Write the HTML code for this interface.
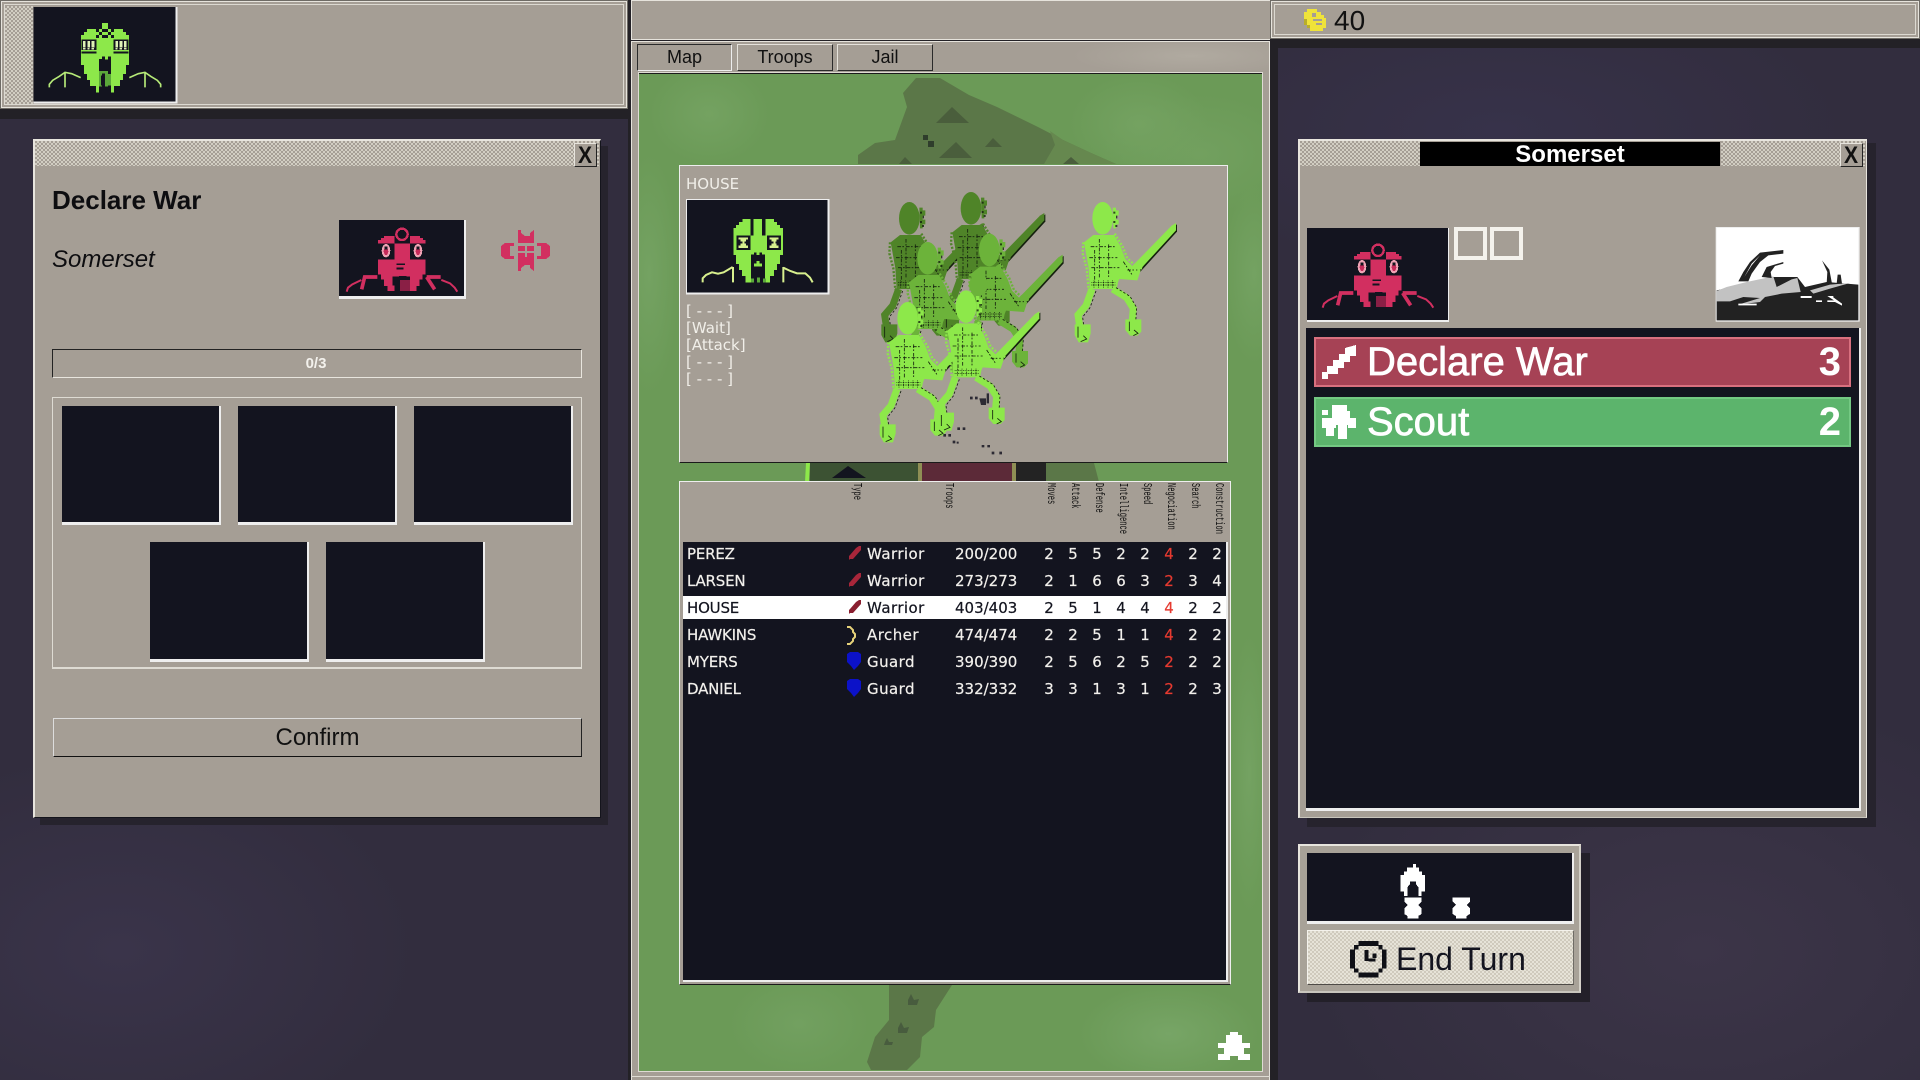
<!DOCTYPE html>
<html><head><meta charset="utf-8"><title>Declare War</title>
<style>
html,body{margin:0;padding:0;width:1920px;height:1080px;overflow:hidden}
body{position:relative;background:#322d3e;background-image:radial-gradient(300px 200px at 120px 950px,#3a344a,transparent),radial-gradient(400px 260px at 1700px 950px,#3c3548,transparent),radial-gradient(350px 150px at 1500px 130px,#37324a,transparent);font-family:"Liberation Sans",sans-serif;color:#0d0d10}
.a{position:absolute;box-sizing:border-box}
.pan{background:#a59e95}
.top{box-shadow:inset 0 0 0 1px #6e6b65,inset 0 0 0 2px #e6e3dc,inset 0 0 0 4px #a59e95,inset 0 0 0 5px #dcd9d1}
.chk{background:repeating-conic-gradient(#d2cec3 0 25%,#a59e95 0 50%) 0 0/4px 4px}
.dk{background:#13141f}
.win{background:#a59e95;border-style:solid;border-width:2px 1px 1px 2px;border-color:#e8e5de #14141c #14141c #e8e5de}
.slot{background:#13141f;border-right:2px solid #eee;border-bottom:3px solid #eee}
.x{width:23px;height:24px;border:1px solid;border-color:#e8e5de #222 #222 #e8e5de;background:#a59e95;font-weight:bold;font-size:24px;line-height:23px;text-align:center;color:#111}
.x b{display:inline-block;transform:scaleX(.88)}
.tab{height:27px;line-height:25px;text-align:center;font-size:18px;border:1px solid;color:#111;background:#a59e95}
.row{left:683px;width:543px;height:23px;display:grid;grid-template-columns:166px 18px 88px 82px repeat(8,24px);line-height:25px;font-family:"DejaVu Sans",sans-serif;font-size:15px;color:#f2f0ec;white-space:nowrap;-webkit-text-stroke:.2px currentColor}
.row span{overflow:visible}
.row span:first-child{padding-left:4px;letter-spacing:-.2px}
.row span:nth-child(3){letter-spacing:.45px}
.row .n{text-align:center}
.row .r{color:#e63a30}
.hi{background:#fff;color:#13141f}
.hd{font-family:"Liberation Mono",monospace;font-size:12px;line-height:12px;color:#111;transform-origin:0 0;white-space:nowrap}
.act{font-family:"DejaVu Sans",sans-serif;font-size:15px;color:#f1efe9;left:686px;line-height:17px}
svg{position:absolute;display:block;overflow:visible}
.bar{left:1314px;width:537px;height:50px;border:2px solid;color:#fff;font-size:40px;line-height:46px;-webkit-text-stroke:.7px #fff}
.bar b{-webkit-text-stroke:0}
</style></head><body>

<!-- structural dark strips -->
<div class="a" style="left:0;top:109px;width:628px;height:10px;background:#232126"></div>
<div class="a" style="left:628px;top:0;width:3px;height:1080px;background:#232126"></div>
<div class="a" style="left:1270px;top:39px;width:650px;height:9px;background:#232126"></div>
<div class="a" style="left:1270px;top:39px;width:8px;height:1041px;background:#232126"></div>

<!-- top left panel -->
<div class="a pan top" style="left:0;top:0;width:628px;height:109px"></div>
<div class="a chk" style="left:5px;top:6px;width:28px;height:98px"></div>
<svg style="left:30px;top:5px" width="150" height="100" viewBox="0 0 450 300" shape-rendering="crispEdges">
<rect x="10" y="6" width="432" height="290" fill="#eee"/><rect x="10" y="6" width="427" height="284" fill="#13141f"/>
<path fill="#8de84a" d="M180 72H207V63H216V54H234V63H243V72H270V72H279V81H288V90H297V180H288V207H279V225H270V243H252V262H198V243H180V225H171V207H162V180H153V90H162V81H171V72H180Z"/>
<path fill="#13141f" d="M207 63h9v9h-9zM234 63h9v9h-9zM216 72h18v9h-18zM198 72h9v9h-9zM243 72h9v9h-9zM207 81h9v9h-9zM234 81h9v9h-9zM198 90h9v9h-9zM216 90h18v9h-18zM243 90h9v9h-9z"/>
<path fill="#13141f" d="M155 103H200V146H155zM250 103H295V146H250z"/>
<path fill="#8de84a" d="M155 135H200V140H155zM250 135H295V140H250z"/>
<path fill="#dff3b5" d="M159 108h8v19h-8zM172 108h8v19h-8zM185 108h8v19h-8zM256 108h8v19h-8zM269 108h8v19h-8zM282 108h8v19h-8zM159 129h7v5h-7zM172 129h7v5h-7zM185 129h7v5h-7zM256 129h7v5h-7zM269 129h7v5h-7zM282 129h7v5h-7z"/>
<path fill="#13141f" d="M207 162h9v-8h9v9h9v-9h9v8V243H243V262H207Z"/>
<path fill="#5ba83a" d="M207 198h9v46h-9zM225 198h9v46h-9zM216 198h9v8h-9zM234 207h9v35h-9z"/>
<path fill="#13141f" d="M213 211h8v30h-8z"/>
<path fill="none" stroke="#b6ea78" stroke-width="5" shape-rendering="auto" d="M58 247V238L68 226L88 214L105 202L125 206L152 218M105 204V247M298 218L325 206L345 202L362 214L382 226L392 238V247M345 204V247"/>
</svg>

<!-- left dialog -->
<div class="a win" style="left:33px;top:139px;width:568px;height:679px;box-shadow:7px 7px 0 #26232d"></div>
<div class="a chk" style="left:35px;top:141px;width:540px;height:25px"></div>
<div class="a chk" style="left:575px;top:141px;width:24px;height:25px"></div>
<div class="a x" style="left:574px;top:143px"><b>X</b></div>
<div class="a" style="left:52px;top:184px;font-weight:bold;font-size:26px;line-height:32px;white-space:nowrap">Declare War</div>
<div class="a" style="left:52px;top:244px;font-style:italic;font-size:24px;line-height:32px;white-space:nowrap">Somerset</div>
<div class="a" style="left:339px;top:220px;width:127px;height:79px;background:#eee"></div>
<svg style="left:339px;top:220px;overflow:hidden" width="125" height="76" viewBox="15 14 125 76" shape-rendering="crispEdges"><use href="#red"/></svg>
<svg style="left:0;top:0" width="600" height="300" shape-rendering="crispEdges"><path fill="#d22f60" d="M518 230L521 230V233L525 236L530 236V233L534 230V243H518ZM518 271L521 271V268L525 265L530 265V268L534 271V257H518ZM505 243h9v3h-4v10h4v3h-9l-4-3v-10zM546 243h-9v3h4v10h-4v3h9l4-3v-10zM518 246h7v5h-7zM527 246h7v5h-7zM518 253h7v4h-7zM527 253h7v4h-7z"/></svg>
<div class="a" style="left:52px;top:349px;width:530px;height:29px;border:1px solid;border-color:#222 #e8e5de #e8e5de #222;text-align:center;color:#f3f1ec;font-weight:bold;font-size:15px;line-height:27px;padding-right:2px">0/3</div>
<div class="a" style="left:52px;top:397px;width:530px;height:272px;border:1px solid #dedbd3;border-bottom:2px solid #dedbd3"></div>
<div class="a slot" style="left:62px;top:406px;width:159px;height:119px"></div>
<div class="a slot" style="left:238px;top:406px;width:159px;height:119px"></div>
<div class="a slot" style="left:414px;top:406px;width:159px;height:119px"></div>
<div class="a slot" style="left:150px;top:542px;width:159px;height:120px"></div>
<div class="a slot" style="left:326px;top:542px;width:159px;height:120px"></div>
<div class="a" style="left:53px;top:718px;width:529px;height:39px;border:1px solid;border-color:#ddd #222 #111 #ddd;text-align:center;font-size:24px;line-height:38px;color:#111">Confirm</div>

<!-- center column -->
<div class="a pan" style="left:631px;top:0;width:639px;height:40px;box-shadow:inset 0 1px 0 #e6e3dc,inset 1px 0 0 #e6e3dc,inset 0 -1px 0 #e6e3dc"></div>
<div class="a" style="left:631px;top:40px;width:639px;height:1px;background:#232126"></div>
<div class="a pan" style="left:631px;top:41px;width:639px;height:1039px;box-shadow:inset 0 1px 0 #e6e3dc,inset 1px 0 0 #e6e3dc,inset -1px 0 0 #e6e3dc;background:#a59e95;background-image:radial-gradient(120px 20px at 560px 15px,#b0aaa0,transparent)"></div>
<div class="a tab" style="left:637px;top:44px;width:95px;border-color:#2a2a2a #eee #eee #2a2a2a">Map</div>
<div class="a tab" style="left:737px;top:44px;width:96px;border-color:#e6e3dc #2a2a2a #2a2a2a #e6e3dc">Troops</div>
<div class="a tab" style="left:837px;top:44px;width:96px;border-color:#e6e3dc #2a2a2a #2a2a2a #e6e3dc">Jail</div>

<!-- map -->
<div class="a" style="left:639px;top:73px;width:623px;height:998px;background:#6b9a57;background-image:radial-gradient(60px 50px at 70px 40px,#74a261,transparent),radial-gradient(70px 50px at 500px 50px,#74a261,transparent),radial-gradient(100px 60px at 560px 80px,#72a05f,transparent),radial-gradient(30px 120px at 10px 200px,#74a262,transparent),radial-gradient(30px 90px at 615px 200px,#74a262,transparent),radial-gradient(90px 50px at 530px 960px,#77a566,transparent),radial-gradient(70px 50px at 160px 950px,#72a060,transparent),radial-gradient(20px 140px at 610px 700px,#74a262,transparent);border-top:1px solid #1b1b1b;box-shadow:0 0 0 1px #dedbd3"></div>
<svg style="left:631px;top:60px" width="639" height="1020" viewBox="631 60 639 1020">
<path fill="#5b7748" d="M858 164V155L875 143L895 140L907 107L903 93L916 78H940L969 95L997 107L1038 127L1063 140L1091 153L1116 164Z"/>
<path fill="#66884f" d="M1050 131L1063 140L1091 153L1116 164H1044L1055 145Z"/>
<path fill="#4a5e3c" d="M952 107L969 123H936ZM956 142L972 158H939ZM993 138L1002 147H985ZM905 157L912 164H899ZM1071 157L1079 164H1063Z"/>
<path fill="#2f3d2c" d="M923 135h5v5h-5zM928 141h6v6h-6z"/>
<path fill="#5b7748" d="M809 463H1094L1099 482H805Z"/>
<path fill="#8de84a" d="M806 463h4l-1 19h-4z"/>
<rect x="810" y="463" width="108" height="19" fill="#3c5233"/>
<path fill="#13141f" d="M848 466L866 478H832Z"/>
<rect x="922" y="463" width="92" height="19" fill="#5c2a38"/>
<rect x="918" y="463" width="4" height="19" fill="#8f8f55"/>
<rect x="1012" y="463" width="4" height="19" fill="#8f8f55"/>
<rect x="1016" y="463" width="30" height="19" fill="#232323"/>
<path fill="#5b7748" d="M889 985H952L936 1010L934 1027L922 1037L920 1057L907 1070H871L867 1062L875 1037L889 1020L889 1000Z"/>
<path fill="#485c3e" d="M908 1000l3-6 3 6 5-1-2 6h-9zM898 1028l3-6 3 6 5-1-2 6h-9zM885 1042l2-4 2 4h4l-1 3h-8z"/>
<path fill="#fff" shape-rendering="crispEdges" d="M1230 1032h8v3h4v8h8v5h-6v6h6v6h-12v-4h-8v4h-12v-6h6v-6h-6v-5h8v-8h4z"/>
<rect x="631" y="1076" width="639" height="1" fill="#dedbd3"/>
</svg>

<!-- house panel -->
<div class="a pan" style="left:679px;top:165px;width:549px;height:298px;border:1px solid;border-color:#eee #eee #1a1a1a #eee"></div>
<div class="a" style="left:686px;top:175px;font-family:'DejaVu Sans',sans-serif;font-size:15px;line-height:19px;color:#f1efe9">HOUSE</div>
<svg style="left:682px;top:195px" width="155" height="105" viewBox="0 0 465 315" shape-rendering="crispEdges">
<rect x="12" y="12" width="430" height="286" fill="#eee"/><rect x="15" y="15" width="422" height="277" fill="#13141f"/>
<path fill="#8de84a" d="M182 72H276V81H285V90H294V99H303V180H294V207H285V225H276V243H264V263H190V243H180V225H171V207H162V180H155V99H162V90H171V81H182Z"/>
<path fill="#13141f" d="M205 72h10v50h-10zM240 72h10v50h-10zM163 122H205V165H163zM255 122H297V165H255z"/>
<path fill="#d8f08e" d="M170 128h28v6h-28zM176 134h16v6h-16zM182 140h6v6h-6zM176 146h16v6h-16zM170 152h28v7h-28zM262 128h28v6h-28zM268 134h16v6h-16zM274 140h6v6h-6zM268 146h16v6h-16zM262 152h28v7h-28z"/>
<path fill="#13141f" d="M207 178h9v-6h8v8h8v-8h8v6h9V250H207Z"/>
<path fill="#8de84a" d="M216 206h8v-8h8v8h8v8h-24z"/>
<path fill="#5ba83a" d="M207 250h9v13h-9zM225 248h9v15h-9zM243 250h9v13h-9z"/>
<path fill="#13141f" d="M216 250h9v13h-9zM234 250h9v13h-9z"/>
<path fill="none" stroke="#d8f08e" stroke-width="6" shape-rendering="auto" d="M62 262V250L72 240L90 232L108 236L125 232L152 216M153 216V262M304 216V262M304 218L325 228L345 235L370 235L384 248L392 262"/>
</svg>
<div class="a act" style="top:303px">[ - - - ]</div>
<div class="a act" style="top:320px">[Wait]</div>
<div class="a act" style="top:337px">[Attack]</div>
<div class="a act" style="top:354px">[ - - - ]</div>
<div class="a act" style="top:371px">[ - - - ]</div>

<svg style="left:840px;top:180px" width="360" height="290" viewBox="0 0 1080 870">
<defs>
<g id="s">
<path d="M85 145L205 22L218 14V36L100 165Z" fill="#14200e" transform="translate(3 4)"/>
<path d="M85 145L205 22L218 14V36L100 165Z" fill="currentColor"/>
<ellipse cx="-2" cy="0" rx="31" ry="49" fill="currentColor"/>
<path d="M28-32h10v8h8v16h-8v12h8v14h-8v12h-8z" fill="currentColor"/>
<path d="M30-20h6v6h-6zM38-8h4v8h-4zM30 8h6v6h-6zM36 20h6v6h-6z" fill="#14200e" opacity=".8"/>
<path fill="currentColor" d="M-58 72L-30 50H32L52 85L66 122L90 146L112 156L102 186L48 182L44 192L40 212H-40L-44 150L-52 105Z"/>
<path fill="none" stroke="currentColor" stroke-width="7" stroke-dasharray="6 5" d="M-60 72L-62 105L-50 150L-44 215M34 46L58 85L72 120L96 142L118 152"/>
<path fill="none" stroke="#14200e" stroke-width="2.5" stroke-dasharray="11 4 5 6" d="M-38 85H35M-42 118H42M-36 148H48M-12 62V178M16 78V178M-26 95V190M60 130L88 172M72 155H102"/>
<path fill="none" stroke="#14200e" stroke-width="2" stroke-dasharray="3 2" d="M-36 192H36M-36 200H36M-28 186V208M-14 186V208M0 186V208M14 186V208M28 186V208"/>
<path fill="none" stroke="currentColor" stroke-width="21" d="M-34 212L-52 262L-76 290L-70 330L-60 360M28 212L70 238L90 270L86 315"/>
<path fill="none" stroke="#14200e" stroke-width="2.5" stroke-dasharray="7 6" d="M-22 218L-40 268L-62 296L-58 330M38 208L80 234L100 268L97 312"/>
<path fill="currentColor" d="M-86 318H-38V345L-46 372H-74L-86 350ZM66 303H114V340L102 352H80L66 335Z"/>
<path fill="none" stroke="#14200e" stroke-width="2.5" d="M-76 325V358M-60 352L-50 362L-68 370M78 310V338M92 335L104 345L90 352"/>
</g>
</defs>
<use href="#s" x="210" y="115" style="color:#4f8428"/>
<use href="#s" x="395" y="85" style="color:#4f8428"/>
<use href="#s" x="265" y="235" style="color:#6cb33a"/>
<use href="#s" x="450" y="210" style="color:#6cb33a"/>
<ellipse cx="415" cy="315" rx="28" ry="30" fill="#6cb33a"/>
<use href="#s" x="205" y="415" style="color:#8de84a"/>
<use href="#s" x="380" y="380" style="color:#8de84a"/>
<use href="#s" x="790" y="115" style="color:#8de84a"/>
<path fill="#2c2a33" d="M390 650h8v8h-8zM405 650h8v8h-8zM418 655h20v20h-15zM440 640h7v30h-7zM352 742h8v8h-8zM368 742h8v8h-8zM338 782h8v8h-8zM350 785h6v6h-6zM425 795h8v7h-8zM442 795h8v7h-8zM455 815h8v8h-8zM478 815h8v8h-8zM310 762h8v8h-8zM325 762h8v8h-8z"/>
</svg>

<!-- troops table -->
<div class="a pan" style="left:679px;top:481px;width:552px;height:504px;border:1px solid;border-color:#eee #eee #1a1a1a #eee"></div>
<div class="a dk" style="left:683px;top:542px;width:545px;height:440px;border-right:2px solid #eee;border-bottom:2px solid #eee"></div>
<div class="a hd" style="left:863px;top:483px;transform:rotate(90deg) scaleX(.59)">Type</div>
<div class="a hd" style="left:955px;top:483px;transform:rotate(90deg) scaleX(.59)">Troops</div>
<div class="a hd" style="left:1057px;top:483px;transform:rotate(90deg) scaleX(.59)">Moves</div>
<div class="a hd" style="left:1081px;top:483px;transform:rotate(90deg) scaleX(.59)">Attack</div>
<div class="a hd" style="left:1105px;top:483px;transform:rotate(90deg) scaleX(.59)">Defense</div>
<div class="a hd" style="left:1129px;top:483px;transform:rotate(90deg) scaleX(.59)">Intelligence</div>
<div class="a hd" style="left:1153px;top:483px;transform:rotate(90deg) scaleX(.59)">Speed</div>
<div class="a hd" style="left:1177px;top:483px;transform:rotate(90deg) scaleX(.59)">Negociation</div>
<div class="a hd" style="left:1201px;top:483px;transform:rotate(90deg) scaleX(.59)">Search</div>
<div class="a hd" style="left:1225px;top:483px;transform:rotate(90deg) scaleX(.59)">Construction</div>

<div class="a row" style="top:542px"><span>PEREZ</span><span></span><span>Warrior</span><span>200/200</span><span class="n">2</span><span class="n">5</span><span class="n">5</span><span class="n">2</span><span class="n">2</span><span class="n r">4</span><span class="n">2</span><span class="n">2</span></div>
<div class="a row" style="top:569px"><span>LARSEN</span><span></span><span>Warrior</span><span>273/273</span><span class="n">2</span><span class="n">1</span><span class="n">6</span><span class="n">6</span><span class="n">3</span><span class="n r">2</span><span class="n">3</span><span class="n">4</span></div>
<div class="a row hi" style="top:596px"><span>HOUSE</span><span></span><span>Warrior</span><span>403/403</span><span class="n">2</span><span class="n">5</span><span class="n">1</span><span class="n">4</span><span class="n">4</span><span class="n r">4</span><span class="n">2</span><span class="n">2</span></div>
<div class="a row" style="top:623px"><span>HAWKINS</span><span></span><span>Archer</span><span>474/474</span><span class="n">2</span><span class="n">2</span><span class="n">5</span><span class="n">1</span><span class="n">1</span><span class="n r">4</span><span class="n">2</span><span class="n">2</span></div>
<div class="a row" style="top:650px"><span>MYERS</span><span></span><span>Guard</span><span>390/390</span><span class="n">2</span><span class="n">5</span><span class="n">6</span><span class="n">2</span><span class="n">5</span><span class="n r">2</span><span class="n">2</span><span class="n">2</span></div>
<div class="a row" style="top:677px"><span>DANIEL</span><span></span><span>Guard</span><span>332/332</span><span class="n">3</span><span class="n">3</span><span class="n">1</span><span class="n">3</span><span class="n">1</span><span class="n r">2</span><span class="n">2</span><span class="n">3</span></div>
<svg style="left:0;top:0" width="1" height="1">
<path fill="#a8263a" d="M861 546v4l-8 9h-3l-1 1v-4l1-1 6-7 3-2z"/>
<path fill="#a8263a" d="M861 573v4l-8 9h-3l-1 1v-4l1-1 6-7 3-2z"/>
<path fill="#8a1f30" d="M861 600v4l-8 9h-3l-1 1v-4l1-1 6-7 3-2z"/>
<path fill="none" stroke="#e6d27a" stroke-width="2" d="M847 627h3l3 3v2l2 2v3l-2 2v2l-3 3h-3"/>
<path fill="#0c12c8" d="M847 654l3-2h8l3 2v8l-3 4-4 4-3-4-4-4z"/>
<path fill="#0c12c8" d="M847 681l3-2h8l3 2v8l-3 4-4 4-3-4-4-4z"/>
</svg>

<!-- top right bar -->
<div class="a pan top" style="left:1270px;top:0;width:650px;height:39px"></div>
<svg style="left:1304px;top:9px" width="22" height="22" viewBox="0 0 22 22" shape-rendering="crispEdges"><path fill="#efe33a" d="M3 0H13V3H17V6H20V9H22V19H19V22H6V19H3V16H0V3H3Z"/><path fill="#b8ad2a" d="M0 10H3V16H6V19H3V16H0Z"/><path fill="#a59e95" d="M8 4h4v4H8zM9 10h9v2H9zM12 14h6v2h-6z"/></svg>
<div class="a" style="left:1334px;top:4px;font-size:28px;line-height:34px;color:#111">40</div>

<!-- right window -->
<div class="a win" style="left:1298px;top:139px;width:569px;height:679px;box-shadow:9px 4px 0 0 #26232d,9px 9px 0 #26232d;border-color:#e8e5de #e8e5de #c9c6bd #e8e5de"></div>
<div class="a chk" style="left:1300px;top:141px;width:120px;height:25px"></div>
<div class="a chk" style="left:1721px;top:141px;width:144px;height:25px"></div>
<div class="a" style="left:1420px;top:142px;width:300px;height:24px;background:#000;color:#fff;font-weight:bold;font-size:24px;line-height:26px;text-align:center">Somerset</div>
<div class="a x" style="left:1840px;top:143px"><b>X</b></div>
<svg style="left:1300px;top:222px" width="155" height="105" viewBox="0 0 155 105" shape-rendering="crispEdges"><use href="#red"/></svg>
<div class="a" style="left:1454px;top:227px;width:33px;height:33px;border:4px solid #f4f2ec"></div>
<div class="a" style="left:1490px;top:227px;width:33px;height:33px;border:4px solid #f4f2ec"></div>
<svg style="left:1710px;top:222px" width="155" height="105" viewBox="0 0 465 315">
<rect x="17" y="15" width="432" height="284" fill="#eee"/>
<rect x="20" y="18" width="425" height="277" fill="#fff"/>
<path fill="#222" d="M20 205L90 190L145 180L190 165L262 165L285 195L350 180L445 188V295H20Z"/>
<path fill="#c2c2c2" d="M20 207L50 195L110 180L190 163L200 195L245 172L262 168L272 210L215 215L165 225L150 240L85 248L150 228L100 225L60 238H20Z"/>
<path fill="#c2c2c2" d="M300 205L360 188L420 183L360 200L310 215Z"/>
<path fill="#222" d="M85 178L100 150L120 120L150 92L220 84V95L175 100L150 120L125 155L115 178Z"/>
<path fill="#fff" d="M103 165L125 125L150 100L125 130Z"/>
<path fill="#222" d="M155 165L170 135L220 120V125L195 132L182 150L185 168Z"/>
<path fill="#222" d="M336 115L358 143L366 185L350 185L352 150ZM383 158H392L396 185H380Z"/>
<path fill="#fff" d="M85 245H140V250H85ZM272 222H305V228H272ZM318 235H336V240H318ZM352 222H370V226L396 245V251L375 240H352V235H372Z"/>
</svg>
<div class="a dk" style="left:1306px;top:328px;width:555px;height:483px;border-right:2px solid #eee;border-bottom:3px solid #eee"></div>
<div class="a bar" style="top:337px;background:#a64255;border-color:#d9707f"><span style="position:absolute;left:51px;top:0;white-space:nowrap">Declare War</span><b style="position:absolute;right:8px;top:0">3</b></div>
<div class="a bar" style="top:397px;background:#5cb46c;border-color:#74c983"><span style="position:absolute;left:51px;top:0;white-space:nowrap">Scout</span><b style="position:absolute;right:8px;top:0">2</b></div>
<svg style="left:0;top:0" width="1" height="1" shape-rendering="crispEdges">
<path fill="#fff" d="M1322 372h5v-6h6v-6h6v-6h6v-6L1356 345V356h-6v6h-6v6h-6v6h-10v5h-6Z"/>
<path fill="#fff" d="M1332 405h15v6h3v7h6v10h-8v-3h-1v14h-9V425h-2v3h-2v8h-8v-8h-4v-10h10v-7h0ZM1322 410h6v5h-6z"/>
</svg>

<!-- end turn -->
<div class="a" style="left:1298px;top:844px;width:283px;height:149px;background:#a8a298;border:2px solid;border-color:#e8e5de #d4d1c8 #c9c6bd #e8e5de;box-shadow:9px 9px 0 #232029"></div>
<div class="a dk" style="left:1307px;top:853px;width:267px;height:71px;border-right:2px solid #eee;border-bottom:3px solid #eee"></div>
<div class="a" style="left:1307px;top:930px;width:267px;height:55px;background:repeating-conic-gradient(#e6e3d8 0 25%,#cfcabd 0 50%) 0 0/4px 4px;border:1px solid;border-color:#f4f2ec #6e6b65 #4e4b47 #f4f2ec"></div>
<svg style="left:1290px;top:790px" width="340" height="220" viewBox="0 0 1020 660" shape-rendering="crispEdges">
<path fill="#fff" d="M369 222H378V232H387V245H396V255H405V305H395V318H385V292L378 282V274H360V282L352 292V318H342V305H332V255H342V245H351V232H369Z"/>
<path fill="#fff" d="M343 322H395V335L385 345L395 355V372L385 378V385H353V378L343 372V355L353 345L343 335Z"/>
<path fill="#fff" d="M488 322H540V335L530 345L540 355V372L530 378V385H498V378L488 372V355L498 345L488 335Z"/>
<path fill="#0f1016" fill-rule="evenodd" d="M205 453H265V465H278V478H290V535H278V548H265V562H205V548H192V535H180V478H192V465H205ZM205 468V478H195V535H205V548H265V535H276V478H265V468Z"/>
<path fill="#0f1016" d="M224 480h11v33h-11zM235 505h22v10h-22zM247 490h12v14h-12z"/>
</svg>
<div class="a" style="left:1396px;top:940px;font-size:32px;line-height:38px;color:#13141f;white-space:nowrap">End Turn</div>

<!-- shared red portrait (coords: real px, crop origin 1300,222) -->
<svg width="0" height="0" style="left:0;top:0"><defs>
<g id="red">
<rect x="7" y="6" width="142" height="94" fill="#eee"/>
<rect x="7" y="6" width="141" height="92" fill="#13141f"/>
<g transform="scale(.3333)">
<path fill="#d22f60" d="M180 90H212V112H162V102H171V96H180ZM258 90H288V96H297V102H305V112H258ZM212 112H258V160H212ZM162 160H212V212H205V238H212V255H190V240H180V220H171V205H162ZM258 160H305V205H296V220H287V240H277V255H258V210H258Z"/>
<path fill="#d22f60" d="M212 160H258V212H212Z"/>
<path fill="#13141f" d="M217 172H243V177H217ZM217 185H238V190H217Z"/>
<path fill="#13141f" d="M212 212H225V255H212Z"/>
<path fill="#8a1f45" d="M228 222H258V255H228Z"/>
<path fill="#13141f" d="M225 210h22v12h-22z"/>
<circle cx="234" cy="85" r="17" fill="#13141f" stroke="#d22f60" stroke-width="7"/>
<ellipse cx="186" cy="134" rx="13" ry="20" fill="#f0a3b5"/><ellipse cx="186" cy="136" rx="7" ry="11" fill="#c62a5a"/><rect x="182" y="122" width="8" height="8" fill="#13141f"/>
<ellipse cx="282" cy="134" rx="13" ry="20" fill="#f0a3b5"/><ellipse cx="282" cy="136" rx="7" ry="11" fill="#c62a5a"/><rect x="278" y="122" width="8" height="8" fill="#13141f"/>
<path fill="none" stroke="#d22f60" stroke-width="11" d="M160 213H122L113 250M308 213H350M308 213L332 250" shape-rendering="auto"/>
<path fill="none" stroke="#d22f60" stroke-width="6" d="M68 257L72 245L85 235L112 222M352 222L378 232L392 245L400 257" shape-rendering="auto"/>
</g>
</g></defs></svg>
</body></html>
